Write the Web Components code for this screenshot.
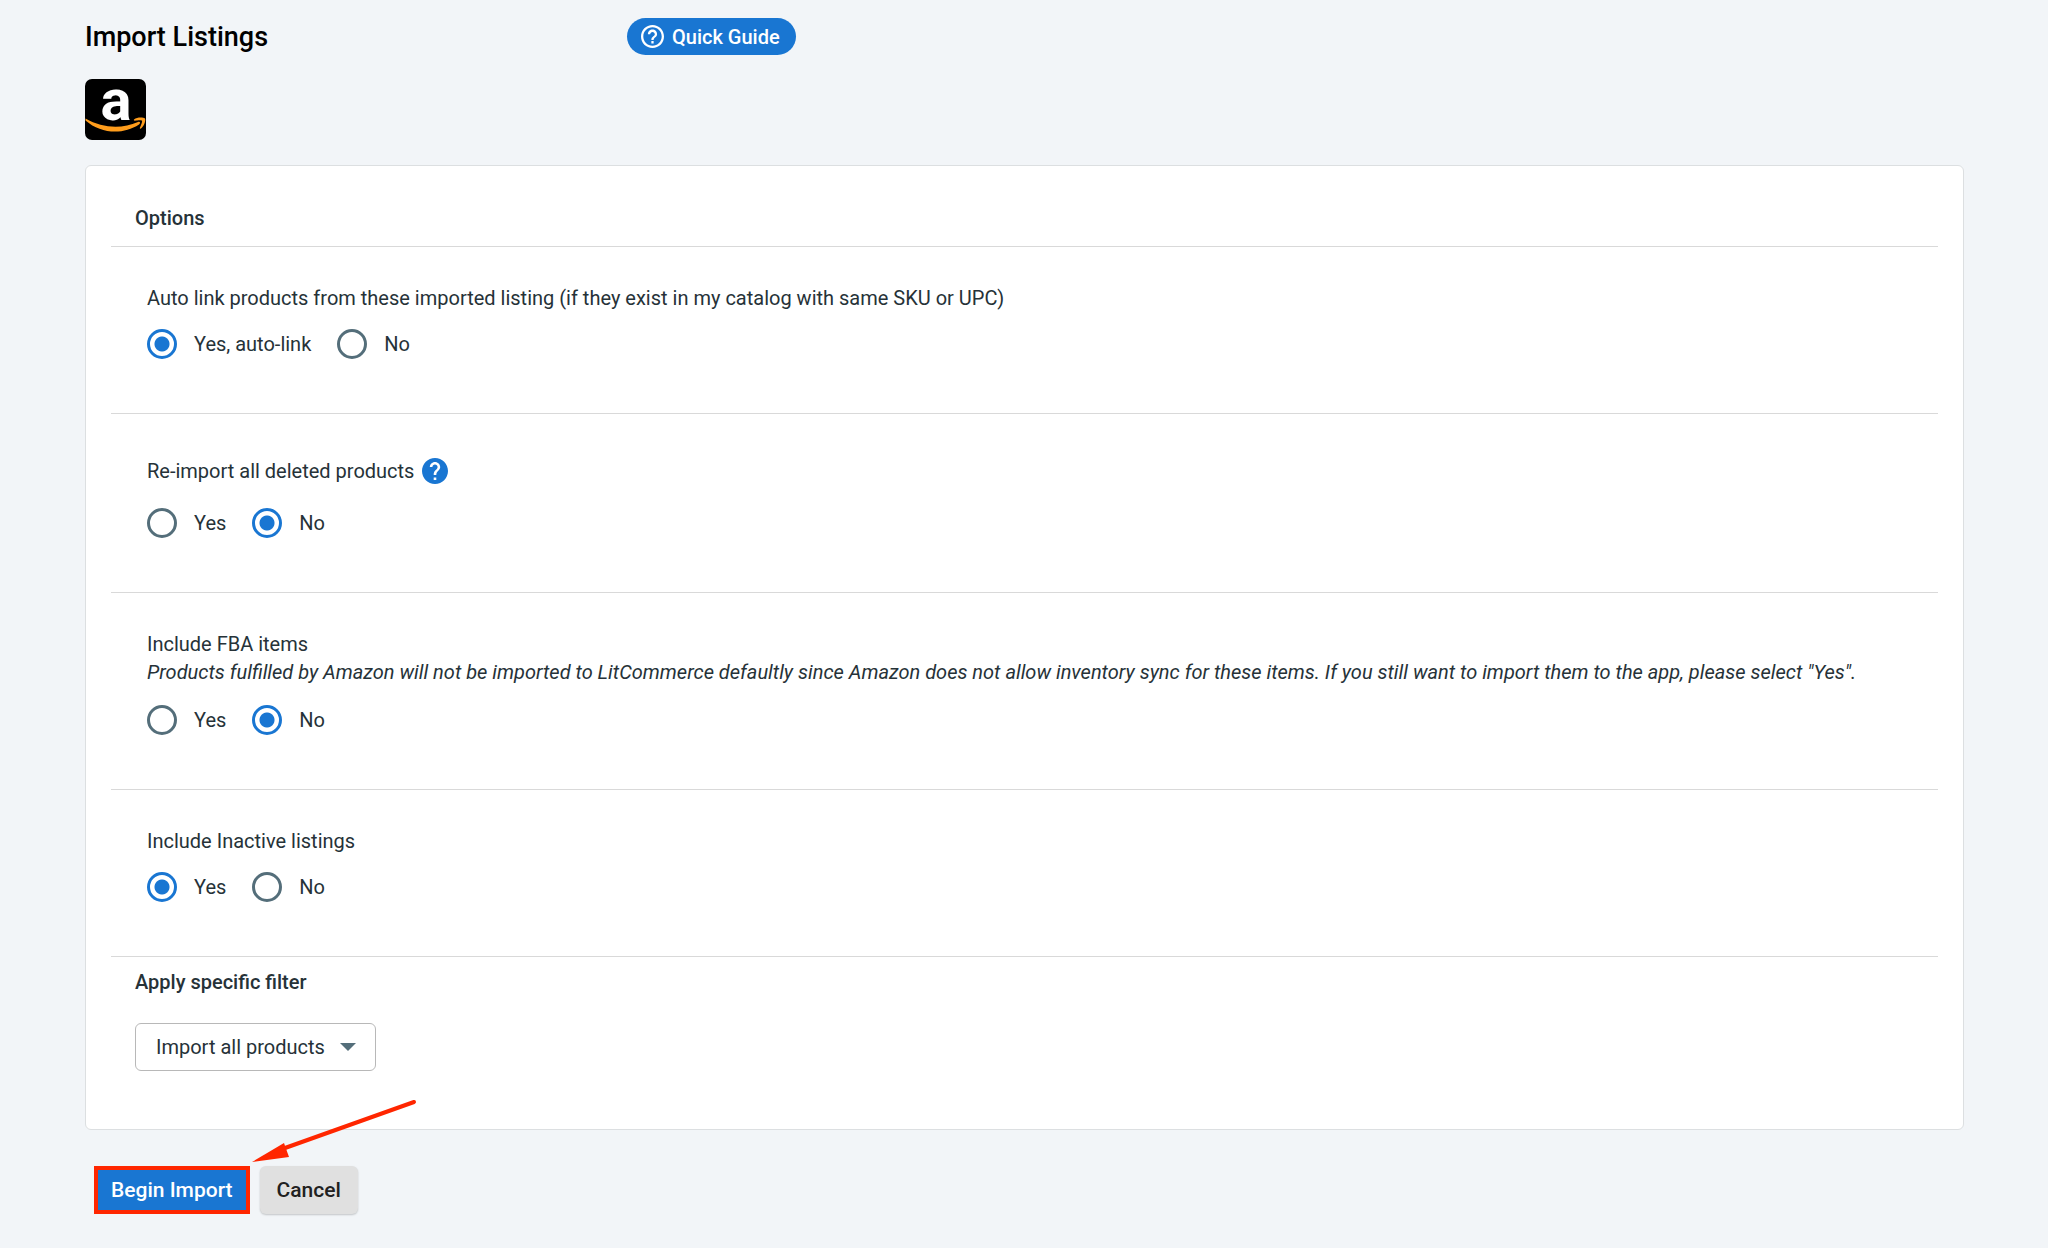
<!DOCTYPE html>
<html lang="en">
<head>
<meta charset="utf-8">
<meta name="viewport" content="width=device-width, initial-scale=1">
<title>Import Listings</title>
<style>
  body { margin: 0; background: #f2f5f8; color: #263238; font: 400 20px/30px Roboto, "Noto Sans", sans-serif; }
</style>
</head>
<body>
<import-page>
  <page-header slot="header">Import Listings<quick-guide slot="action">Quick Guide</quick-guide></page-header>
  <channel-logo slot="header"></channel-logo>
  <options-card>
    <span slot="title">Options</span>
    <import-option name="autolink" choices="Yes, auto-link|No" selected="0">Auto link products from these imported listing (if they exist in my catalog with same SKU or UPC)</import-option>
    <import-option name="reimport" choices="Yes|No" selected="1">Re-import all deleted products<help-mark slot="help"></help-mark></import-option>
    <import-option name="fba" choices="Yes|No" selected="1">Include FBA items<span slot="note">Products fulfilled by Amazon will not be imported to LitCommerce defaultly since Amazon does not allow inventory sync for these items. If you still want to import them to the app, please select "Yes".</span></import-option>
    <import-option name="inactive" choices="Yes|No" selected="0">Include Inactive listings</import-option>
    <filter-select slot="filter" choices="Import all products">Apply specific filter</filter-select>
  </options-card>
  <action-bar slot="footer">
    <action-button kind="primary">Begin Import</action-button>
    <action-button>Cancel</action-button>
  </action-bar>
</import-page>

<script>
const define = (name, html, setup) => customElements.define(name, class extends HTMLElement {
  constructor() {
    super();
    const template = document.createElement('template');
    template.innerHTML = html;
    this.attachShadow({ mode: 'open' }).append(template.content.cloneNode(true));
    if (setup) setup(this, this.shadowRoot);
  }
});

define('import-page', `
  <style>
    :host { display: block; }
    main { display: flex; flex-direction: column; padding: 18px 84px 32px 85px; }
    header { display: flex; flex-direction: column; gap: 24px; margin-bottom: 25px; }
    footer { margin-top: 36px; }
  </style>
  <main>
    <header><slot name="header"></slot></header>
    <slot></slot>
    <footer><slot name="footer"></slot></footer>
  </main>`);

define('page-header', `
  <style>
    :host { display: grid; grid-template-columns: 542px 1fr; align-items: center; }
    h1 { margin: 0; font-size: 27px; line-height: 36px; font-weight: 500; color: #000; }
  </style>
  <h1><slot></slot></h1>
  <div><slot name="action"></slot></div>`);

define('quick-guide', `
  <style>
    :host { display: flex; }
    a { display: flex; align-items: center; gap: 8px; height: 37px; padding: 0 16px 0 14px; border-radius: 19px;
        background: #1976d2; color: #fff; font-size: 20px; font-weight: 500; text-decoration: none; }
    svg { width: 23px; height: 23px; fill: #fff; }
  </style>
  <a href="#guide">
    <svg viewBox="2 2 20 20" aria-hidden="true"><path d="M11 18h2v-2h-2v2zm1-16C6.48 2 2 6.48 2 12s4.48 10 10 10 10-4.48 10-10S17.52 2 12 2zm0 18c-4.41 0-8-3.59-8-8s3.59-8 8-8 8 3.59 8 8-3.59 8-8 8zm0-14c-2.21 0-4 1.79-4 4h2c0-1.1.9-2 2-2s2 .9 2 2c0 2-3 1.75-3 5h2c0-2.25 3-2.5 3-5 0-2.21-1.79-4-4-4z"/></svg>
    <slot></slot>
  </a>`);

define('channel-logo', `
  <style>:host { display: flex; } svg { width: 61px; height: 61px; overflow: visible; }</style>
  <svg viewBox="0 0 61 61" role="img" aria-label="Amazon">
    <rect width="61" height="61" rx="7" fill="#000"/>
    <text x="31" y="41" text-anchor="middle" font-family="Roboto, sans-serif" font-weight="700" font-size="58" fill="#fff">a</text>
    <path fill="#ff9d1c" d="M0.500 39.500 C18 49.500 37 50 53 43 C55 42 56 44 54 45.500 C38 56 16 55 0.500 41.500 Z"/>
    <path fill="#ff9d1c" d="M49 40.500 C52 38 58 38 60 39.500 C61 42 59 47 56 49.500 C55 50 54.500 49.500 55 48.500 C56.500 45 57.500 42.500 57 41.800 C56 41 52 41.500 50 41.700 C49 41.800 48.500 41 49 40.500 Z"/>
  </svg>`);

define('options-card', `
  <style>
    :host { display: block; }
    section { padding: 37px 25px 58px; background: #fff; border: 1px solid #dcdfe1; border-radius: 6px; }
    h2 { margin: 0; padding: 0 24px 13px; font-size: 20px; font-weight: 500; border-bottom: 1px solid #d9d9d9; }
  </style>
  <section>
    <h2><slot name="title"></slot></h2>
    <slot></slot>
    <slot name="filter"></slot>
  </section>`);

define('import-option', `
  <style>
    :host { display: block; border-bottom: 1px solid #d9d9d9; }
    fieldset { margin: 0; padding: 36px 36px 54px; border: 0; min-width: 0; }
    legend { float: left; width: 100%; padding: 0; display: flex; align-items: center; gap: 8px; }
    .note { clear: both; font-style: italic; }
    ::slotted([slot=note]) { display: block; line-height: 26px; padding-bottom: 4px; }
    .choices { clear: both; display: flex; gap: 26px; padding-top: 16px; }
    label { display: flex; align-items: center; gap: 17px; }
    input { appearance: none; box-sizing: border-box; width: 30px; height: 30px; margin: 0; border: 3px solid #546e7a; border-radius: 50%; }
    input:checked { border-color: #1976d2; background: radial-gradient(circle, #1976d2 7px, transparent 8px); }
  </style>
  <fieldset>
    <legend><slot></slot><slot name="help"></slot></legend>
    <div class="note"><slot name="note"></slot></div>
    <div class="choices"></div>
  </fieldset>`, (host, root) => {
    const row = root.querySelector('.choices');
    host.getAttribute('choices').split('|').forEach((text, i) => {
      const label = document.createElement('label');
      const input = document.createElement('input');
      input.type = 'radio';
      input.name = host.getAttribute('name');
      input.checked = i === Number(host.getAttribute('selected'));
      const caption = document.createElement('span');
      caption.textContent = text;
      label.append(input, caption);
      row.append(label);
    });
  });

define('help-mark', `
  <style>
    :host { display: flex; align-items: center; height: 42px; }
    button { display: flex; padding: 0; border: 0; background: none; }
    svg { width: 26px; height: 26px; fill: #1976d2; }
  </style>
  <button type="button" aria-label="Help"><svg viewBox="2 2 20 20" aria-hidden="true"><path d="M12 2C6.480 2 2 6.480 2 12s4.480 10 10 10 10-4.480 10-10S17.520 2 12 2zm1 17h-2v-2h2v2zm2.070-7.750l-.9.920C13.450 12.900 13 13.500 13 15h-2v-.5c0-1.100.450-2.100 1.170-2.830l1.240-1.260c.370-.360.590-.860.590-1.410 0-1.100-.9-2-2-2s-2 .9-2 2H8c0-2.210 1.790-4 4-4s4 1.790 4 4c0 .880-.360 1.680-.930 2.250z"/></svg></button>`);

define('filter-select', `
  <style>
    :host { display: flex; flex-direction: column; align-items: flex-start; gap: 26px; padding: 10px 24px 0; }
    label { font-weight: 500; }
    .box { display: grid; align-items: center; }
    select, svg { grid-area: 1 / 1; }
    select { appearance: none; height: 48px; padding: 0 50px 0 20px; font: inherit; color: inherit; background: #fff; border: 1px solid #b8b8b8; border-radius: 6px; }
    svg { justify-self: end; margin-right: 20px; width: 16px; height: 8px; fill: #546e7a; pointer-events: none; }
  </style>
  <label for="filter"><slot></slot></label>
  <div class="box">
    <select id="filter"></select>
    <svg viewBox="0 0 16 8" aria-hidden="true"><path d="M0 0h16L8 8z"/></svg>
  </div>`, (host, root) => {
    host.getAttribute('choices').split('|').forEach(text => root.querySelector('select').add(new Option(text)));
  });

define('action-bar', `
  <style>
    :host { display: flex; gap: 10px; padding-left: 9px; position: relative; }
    svg { position: absolute; left: 166px; bottom: 50px; width: 168px; height: 66px; pointer-events: none; }
  </style>
  <slot></slot>
  <svg viewBox="0 0 168 66" aria-hidden="true">
    <path d="M34 50 L163 4" stroke="#ff2600" stroke-width="4" stroke-linecap="round"/>
    <path d="M1 64 L33 45 L38 59 Z" fill="#ff2600"/>
  </svg>`);

define('action-button', `
  <style>
    :host { display: block; }
    button { display: block; box-sizing: border-box; height: 48px; padding: 0 17px; border: 0; border-radius: 6px;
             background: #e0e0e0; color: #212121; font: inherit; font-size: 21px; font-weight: 500; box-shadow: 0 1px 2px #0003; }
    :host([kind=primary]) button { padding: 0 13px; border: 4px solid #ff2600; border-radius: 0; background: #1976d2; color: #fff; box-shadow: none; }
  </style>
  <button type="button"><slot></slot></button>`);
</script>
</body>
</html>
